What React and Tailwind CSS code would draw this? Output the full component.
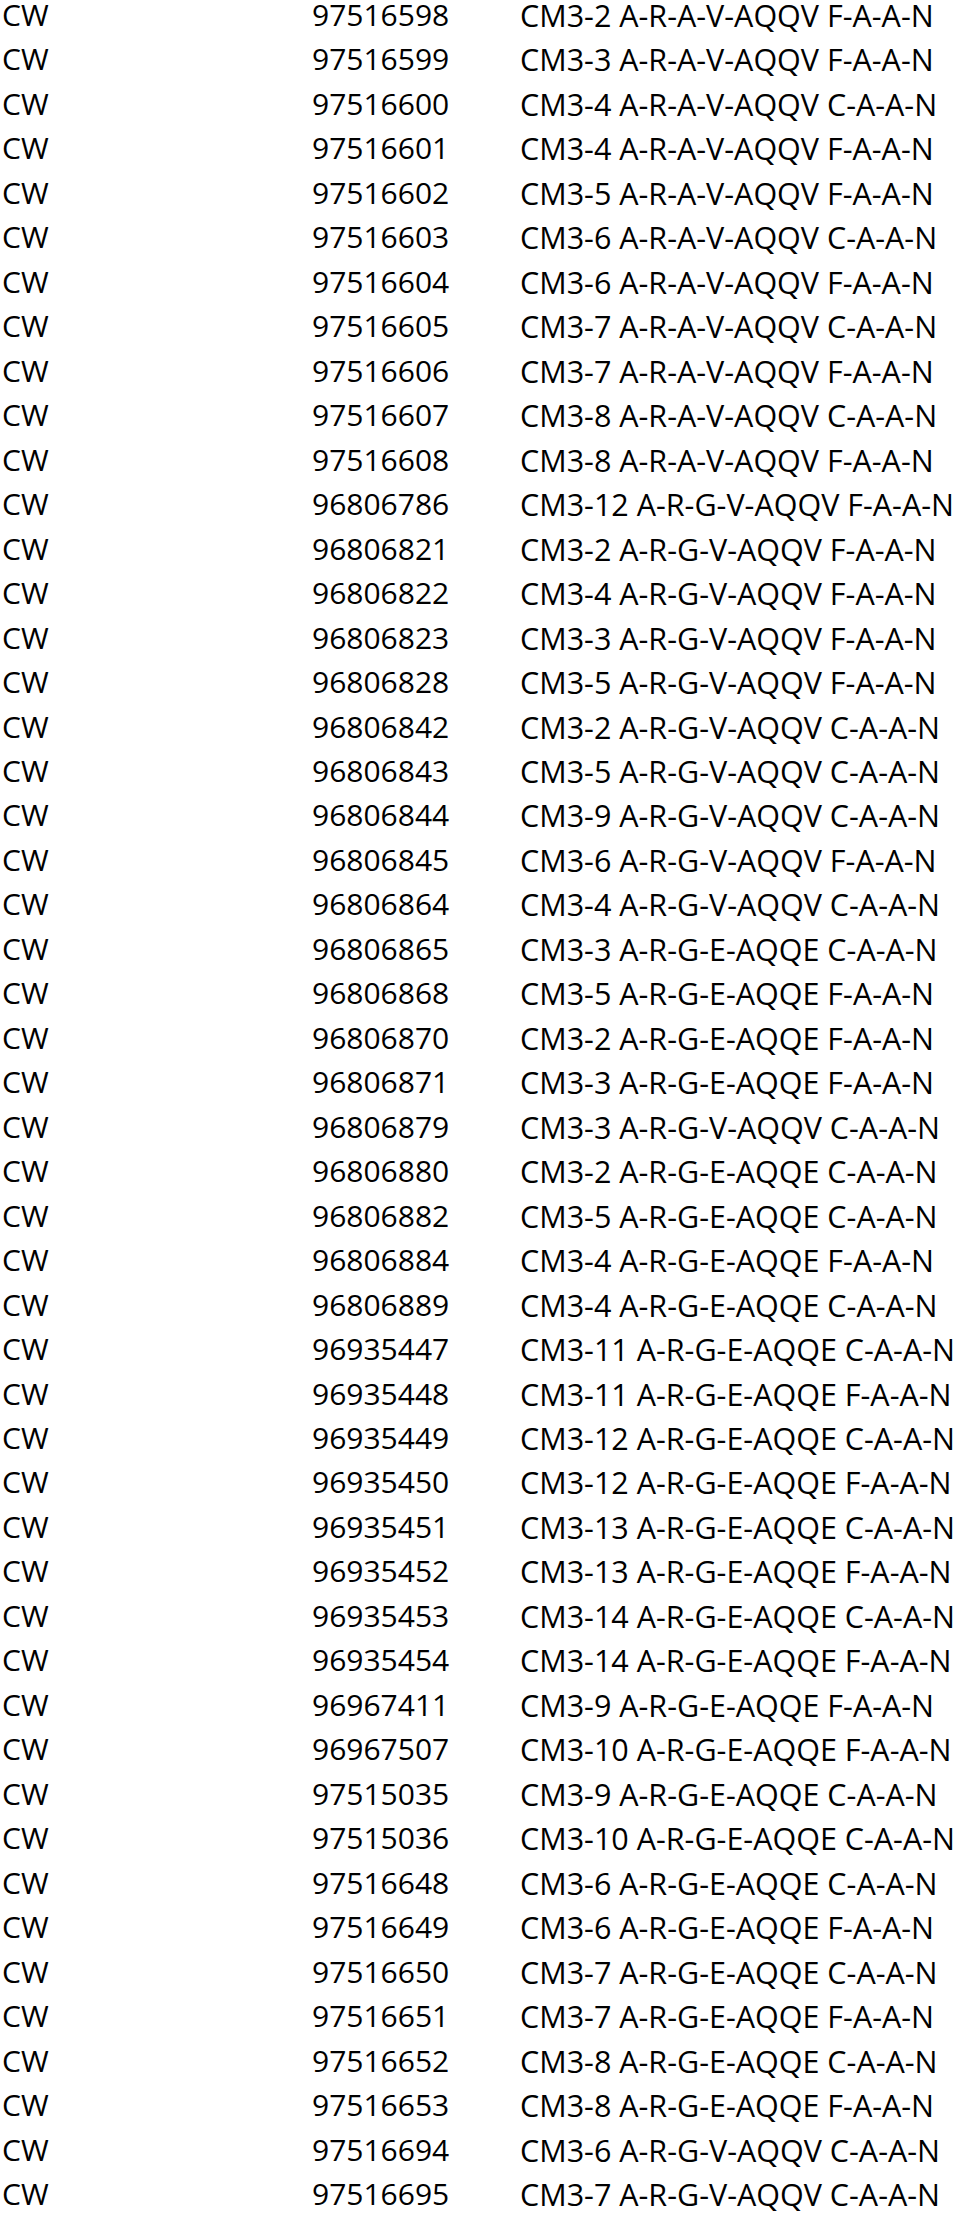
const rows = [
  ['97516598', 'CM3-2 A-R-A-V-AQQV F-A-A-N'],
  ['97516599', 'CM3-3 A-R-A-V-AQQV F-A-A-N'],
  ['97516600', 'CM3-4 A-R-A-V-AQQV C-A-A-N'],
  ['97516601', 'CM3-4 A-R-A-V-AQQV F-A-A-N'],
  ['97516602', 'CM3-5 A-R-A-V-AQQV F-A-A-N'],
  ['97516603', 'CM3-6 A-R-A-V-AQQV C-A-A-N'],
  ['97516604', 'CM3-6 A-R-A-V-AQQV F-A-A-N'],
  ['97516605', 'CM3-7 A-R-A-V-AQQV C-A-A-N'],
  ['97516606', 'CM3-7 A-R-A-V-AQQV F-A-A-N'],
  ['97516607', 'CM3-8 A-R-A-V-AQQV C-A-A-N'],
  ['97516608', 'CM3-8 A-R-A-V-AQQV F-A-A-N'],
  ['96806786', 'CM3-12 A-R-G-V-AQQV F-A-A-N'],
  ['96806821', 'CM3-2 A-R-G-V-AQQV F-A-A-N'],
  ['96806822', 'CM3-4 A-R-G-V-AQQV F-A-A-N'],
  ['96806823', 'CM3-3 A-R-G-V-AQQV F-A-A-N'],
  ['96806828', 'CM3-5 A-R-G-V-AQQV F-A-A-N'],
  ['96806842', 'CM3-2 A-R-G-V-AQQV C-A-A-N'],
  ['96806843', 'CM3-5 A-R-G-V-AQQV C-A-A-N'],
  ['96806844', 'CM3-9 A-R-G-V-AQQV C-A-A-N'],
  ['96806845', 'CM3-6 A-R-G-V-AQQV F-A-A-N'],
  ['96806864', 'CM3-4 A-R-G-V-AQQV C-A-A-N'],
  ['96806865', 'CM3-3 A-R-G-E-AQQE C-A-A-N'],
  ['96806868', 'CM3-5 A-R-G-E-AQQE F-A-A-N'],
  ['96806870', 'CM3-2 A-R-G-E-AQQE F-A-A-N'],
  ['96806871', 'CM3-3 A-R-G-E-AQQE F-A-A-N'],
  ['96806879', 'CM3-3 A-R-G-V-AQQV C-A-A-N'],
  ['96806880', 'CM3-2 A-R-G-E-AQQE C-A-A-N'],
  ['96806882', 'CM3-5 A-R-G-E-AQQE C-A-A-N'],
  ['96806884', 'CM3-4 A-R-G-E-AQQE F-A-A-N'],
  ['96806889', 'CM3-4 A-R-G-E-AQQE C-A-A-N'],
  ['96935447', 'CM3-11 A-R-G-E-AQQE C-A-A-N'],
  ['96935448', 'CM3-11 A-R-G-E-AQQE F-A-A-N'],
  ['96935449', 'CM3-12 A-R-G-E-AQQE C-A-A-N'],
  ['96935450', 'CM3-12 A-R-G-E-AQQE F-A-A-N'],
  ['96935451', 'CM3-13 A-R-G-E-AQQE C-A-A-N'],
  ['96935452', 'CM3-13 A-R-G-E-AQQE F-A-A-N'],
  ['96935453', 'CM3-14 A-R-G-E-AQQE C-A-A-N'],
  ['96935454', 'CM3-14 A-R-G-E-AQQE F-A-A-N'],
  ['96967411', 'CM3-9 A-R-G-E-AQQE F-A-A-N'],
  ['96967507', 'CM3-10 A-R-G-E-AQQE F-A-A-N'],
  ['97515035', 'CM3-9 A-R-G-E-AQQE C-A-A-N'],
  ['97515036', 'CM3-10 A-R-G-E-AQQE C-A-A-N'],
  ['97516648', 'CM3-6 A-R-G-E-AQQE C-A-A-N'],
  ['97516649', 'CM3-6 A-R-G-E-AQQE F-A-A-N'],
  ['97516650', 'CM3-7 A-R-G-E-AQQE C-A-A-N'],
  ['97516651', 'CM3-7 A-R-G-E-AQQE F-A-A-N'],
  ['97516652', 'CM3-8 A-R-G-E-AQQE C-A-A-N'],
  ['97516653', 'CM3-8 A-R-G-E-AQQE F-A-A-N'],
  ['97516694', 'CM3-6 A-R-G-V-AQQV C-A-A-N'],
  ['97516695', 'CM3-7 A-R-G-V-AQQV C-A-A-N'],
];

export default function App() {
  return (
    <div className="w-[960px] h-[2214px] overflow-hidden bg-white text-black">
      <div className="pl-[2px] font-['Open_Sans',sans-serif] text-[30px]">
        {rows.map(([code, desc]) => (
          <div key={code} className="grid grid-cols-[310px_208px_1fr] h-[44.47px] leading-[30px] whitespace-nowrap">
            <span>CW</span>
            <span>{code}</span>
            <span className="text-[30.5px] leading-[30px]">{desc}</span>
          </div>
        ))}
      </div>
    </div>
  );
}
